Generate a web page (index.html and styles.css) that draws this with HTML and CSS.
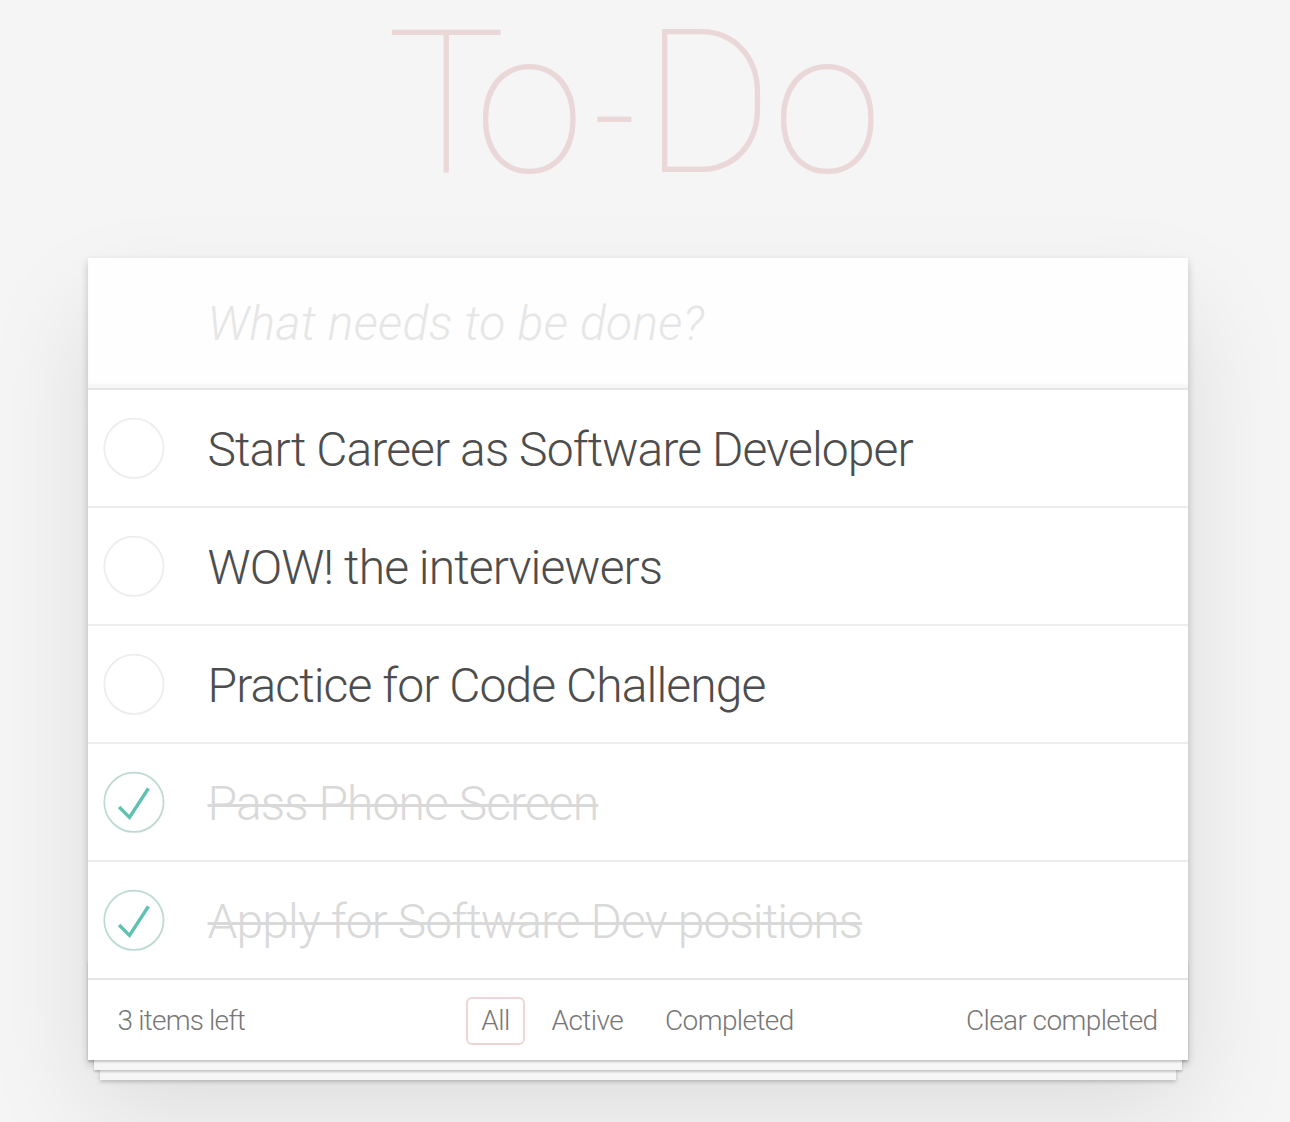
FILE: index.html
```html
<!DOCTYPE html>
<html lang="en">
<head>
<meta charset="utf-8">
<title>To-Do</title>
<link rel="stylesheet" href="styles.css">
</head>
<body>
<div class="viewport">
  <section class="todoapp">
    <header class="header">
      <h1 class="title">T<span class="ch-o1">o</span><span class="ch-dash">-</span><span class="ch-d">D</span><span class="ch-o2">o</span></h1>
    </header>
    <div class="card">
      <input class="new-todo" type="text" placeholder="What needs to be done?">
      <section class="main">
        <ul class="todo-list">
          <li class="todo">
            <svg class="toggle" width="80" height="80" viewBox="-10 -18 100 135"><circle cx="50" cy="50" r="50" fill="none" stroke="#ededed" stroke-width="3"/></svg>
            <span class="label">Start Career as Software Developer</span>
          </li>
          <li class="todo">
            <svg class="toggle" width="80" height="80" viewBox="-10 -18 100 135"><circle cx="50" cy="50" r="50" fill="none" stroke="#ededed" stroke-width="3"/></svg>
            <span class="label">WOW! the interviewers</span>
          </li>
          <li class="todo">
            <svg class="toggle" width="80" height="80" viewBox="-10 -18 100 135"><circle cx="50" cy="50" r="50" fill="none" stroke="#ededed" stroke-width="3"/></svg>
            <span class="label">Practice for Code Challenge</span>
          </li>
          <li class="todo completed">
            <svg class="toggle" width="80" height="80" viewBox="-10 -18 100 135"><circle cx="50" cy="50" r="50" fill="none" stroke="#bddad5" stroke-width="3"/><path fill="#5dc2af" d="M72 25L42 71 27 56l-4 4 20 20 34-52z"/></svg>
            <span class="label">Pass Phone Screen</span>
          </li>
          <li class="todo completed">
            <svg class="toggle" width="80" height="80" viewBox="-10 -18 100 135"><circle cx="50" cy="50" r="50" fill="none" stroke="#bddad5" stroke-width="3"/><path fill="#5dc2af" d="M72 25L42 71 27 56l-4 4 20 20 34-52z"/></svg>
            <span class="label">Apply for Software Dev positions</span>
          </li>
        </ul>
      </section>
      <footer class="footer">
        <span class="todo-count">3 items left</span>
        <ul class="filters">
          <li><a class="selected">All</a></li>
          <li><a>Active</a></li>
          <li><a>Completed</a></li>
        </ul>
        <span class="clear-completed">Clear completed</span>
      </footer>
    </div>
  </section>
</div>
</body>
</html>
```
FILE: styles.css
```css
html, body {
  margin: 0;
  padding: 0;
}

body {
  background: #f5f5f5;
  color: #4d4d4d;
  font-family: Roboto, "Liberation Sans", sans-serif;
  font-weight: 300;
  font-size: 28px;
  line-height: 1.4;
}

.viewport {
  width: 1275px;
}

.todoapp {
  width: 1100px;
  margin: 0 auto 80px;
}

.header {
  padding-top: 4px;
  margin-bottom: 54px;
}

.title {
  margin: 0;
  height: 200px;
  padding-right: 12px;
  font-size: 200px;
  line-height: 200px;
  font-weight: 100;
  letter-spacing: -6px;
  text-align: center;
  white-space: nowrap;
  color: rgba(175, 47, 47, 0.15);
}

.ch-o1 { margin-left: -26px; }
.ch-dash {
  display: inline-block;
  margin-left: 8px;
  transform: translateY(13px) scaleX(0.74);
}
.ch-d { margin-left: 3px; }
.ch-o2 { margin-left: 5px; }

.card {
  position: relative;
  background: #fff;
  box-shadow: 0 4px 8px rgba(0, 0, 0, 0.2), 0 50px 100px rgba(0, 0, 0, 0.1);
}

.new-todo {
  display: block;
  width: 100%;
  height: 130px;
  box-sizing: border-box;
  margin: 0;
  padding: 0 32px 0 120px;
  border: none;
  outline: none;
  background: rgba(0, 0, 0, 0.003);
  box-shadow: inset 0 -4px 2px rgba(0, 0, 0, 0.03);
  font-family: inherit;
  font-size: 48px;
  font-weight: 300;
  letter-spacing: 0.3px;
  color: #4d4d4d;
}

.new-todo::placeholder {
  font-style: italic;
  font-weight: 300;
  color: #e6e6e6;
}

.main {
  border-top: 2px solid #e6e6e6;
}

.todo-list {
  list-style: none;
  margin: 0;
  padding: 0;
}

.todo {
  display: flex;
  align-items: center;
  height: 118px;
  box-sizing: border-box;
  border-bottom: 2px solid #ededed;
  font-size: 48px;
}

.todo:last-child {
  border-bottom: none;
  height: 116px;
}

.toggle {
  flex: none;
  width: 80px;
  height: 80px;
}

.label {
  padding: 4px 0 0 40px;
  line-height: 56px;
  letter-spacing: -0.9px;
  color: #4d4d4d;
  white-space: nowrap;
}

.completed .label {
  color: #d9d9d9;
  text-decoration: line-through;
  text-decoration-thickness: 3px;
}

.footer {
  position: relative;
  display: grid;
  grid-template-columns: 1fr auto 1fr;
  align-items: center;
  height: 40px;
  padding: 17px 30px 23px;
  border-top: 2px solid #e6e6e6;
  color: #777;
  font-size: 28px;
  line-height: 40px;
}

.footer::before {
  content: "";
  position: absolute;
  left: 0;
  right: 0;
  bottom: 0;
  height: 100px;
  overflow: hidden;
  box-shadow: 0 2px 2px rgba(0, 0, 0, 0.2),
              0 16px 0 -6px #f6f6f6,
              0 18px 2px -6px rgba(0, 0, 0, 0.2),
              0 32px 0 -12px #f6f6f6,
              0 34px 4px -12px rgba(0, 0, 0, 0.2);
  pointer-events: none;
}

.todo-count {
  justify-self: start;
  letter-spacing: -0.8px;
}

.filters {
  list-style: none;
  margin: 0;
  padding: 0;
  display: flex;
  justify-self: center;
}

.filters a {
  display: block;
  margin: 0 6px;
  padding: 2px 13px;
  border: 2px solid transparent;
  border-radius: 6px;
  color: inherit;
  line-height: 40px;
  letter-spacing: -0.6px;
}

.filters a.selected {
  border-color: rgba(175, 47, 47, 0.2);
}

.clear-completed {
  justify-self: end;
  letter-spacing: -0.6px;
}
```
